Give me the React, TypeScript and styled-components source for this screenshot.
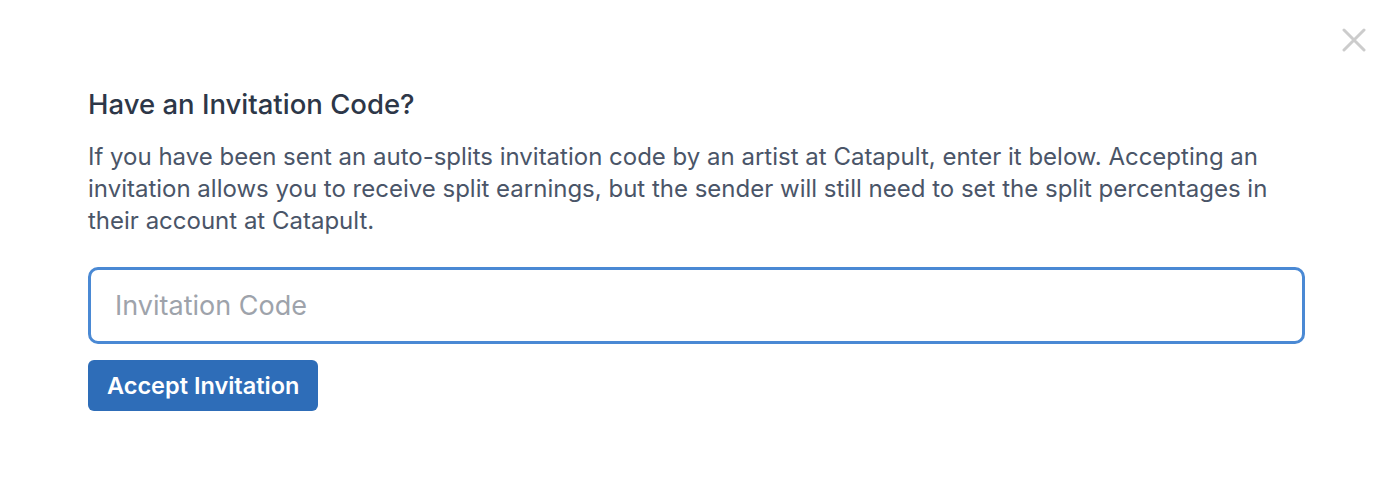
import styled, { createGlobalStyle } from "styled-components";

const GlobalStyle = createGlobalStyle`
  body {
    margin: 0;
    background: #ffffff;
    font-family: Inter, "Noto Sans", sans-serif;
  }
`;

const Modal = styled.div`
  position: relative;
  width: 1398px;
  height: 490px;
  box-sizing: border-box;
  padding: 84px 93px 0 88px;
  background: #ffffff;
`;

const CloseButton = styled.button`
  position: absolute;
  top: 26px;
  right: 30px;
  width: 28px;
  height: 28px;
  padding: 0;
  border: none;
  background: transparent;
  display: flex;
  align-items: center;
  justify-content: center;
  cursor: pointer;
`;

const Heading = styled.h2`
  margin: 0;
  font-size: 27.5px;
  line-height: 40px;
  font-weight: 500;
  color: #2d3748;
`;

const Description = styled.p`
  margin: 17px 0 0;
  font-size: 24px;
  line-height: 32px;
  color: #4a5568;
  max-width: 1190px;
`;

const CodeInput = styled.input`
  display: block;
  box-sizing: border-box;
  width: 100%;
  height: 77px;
  margin-top: 30px;
  padding: 0 24px;
  border: 3px solid #4a89d4;
  border-radius: 10px;
  font-family: inherit;
  font-size: 27px;
  color: #2d3748;
  outline: none;

  &::placeholder {
    color: #9ea3ab;
  }
`;

const AcceptButton = styled.button`
  display: block;
  margin-top: 16px;
  height: 51px;
  padding: 0 19px;
  border: none;
  border-radius: 6px;
  background: #2e6db8;
  color: #ffffff;
  font-family: inherit;
  font-size: 23.5px;
  font-weight: 600;
  cursor: pointer;
`;

const App = () => {
  return (
    <>
      <GlobalStyle />
      <Modal>
        <CloseButton aria-label="Close">
          <svg width="24" height="24" viewBox="0 0 24 24">
            <path
              d="M2 2 L22 22 M22 2 L2 22"
              stroke="#cccccc"
              strokeWidth="3"
              strokeLinecap="round"
            />
          </svg>
        </CloseButton>
        <Heading>Have an Invitation Code?</Heading>
        <Description>
          If you have been sent an auto-splits invitation code by an artist at
          Catapult, enter it below. Accepting an invitation allows you to
          receive split earnings, but the sender will still need to set the
          split percentages in their account at Catapult.
        </Description>
        <CodeInput type="text" placeholder="Invitation Code" />
        <AcceptButton>Accept Invitation</AcceptButton>
      </Modal>
    </>
  );
};

export default App;
